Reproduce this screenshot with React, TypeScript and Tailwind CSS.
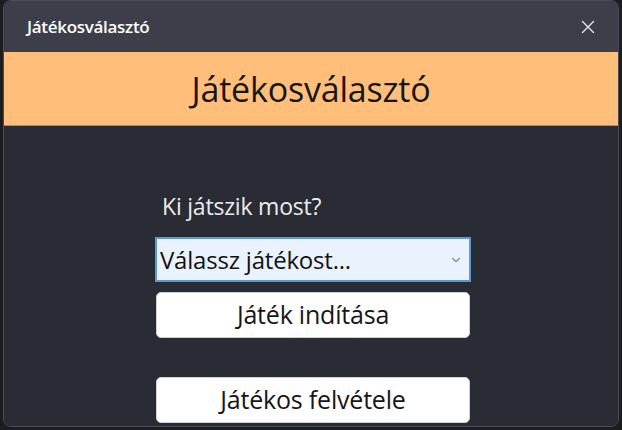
import { X, ChevronDown } from 'lucide-react';

export default function App() {
  return (
    <div className="w-[622px] h-[430px] bg-[#1c1d21] px-[3px] pb-[3px] overflow-hidden font-['Open_Sans',sans-serif]">
      {/* window frame */}
      <div className="h-full flex flex-col rounded-[8px] border border-[#4b4e58] overflow-hidden">
        {/* title bar */}
        <div className="h-[51px] shrink-0 bg-[#3c3f4a] flex items-center justify-between pl-[23px] pr-[19px]">
          <span className="text-[17px] font-semibold text-white tracking-[-0.3px]">Játékosválasztó</span>
          <X className="w-[22px] h-[22px] text-[#e6e6ea]" strokeWidth={1.5} />
        </div>

        {/* header band */}
        <div className="h-[74px] shrink-0 bg-[#ffbf7b] border-b border-[#b8895a] flex items-center justify-center">
          <h1 className="text-[34px] text-[#161616] tracking-[-0.2px] leading-none">Játékosválasztó</h1>
        </div>

        {/* body */}
        <div className="flex-1 bg-[#292c35] pl-[151px] pt-[63px]">
          <div className="w-[316px] flex flex-col">
            <label className="pl-[7px] text-[23px] text-[#ececec] leading-[34px] tracking-[-0.2px]">Ki játszik most?</label>
            <div className="mt-[14px] h-[45px] flex items-center justify-between bg-[#eaf3fd] border-2 border-[#5b9bd5] pl-[3px] pr-[6px]">
              <span className="text-[24px] text-[#111] tracking-[-0.2px]">Válassz játékost...</span>
              <ChevronDown className="w-[14px] h-[14px] text-[#888]" strokeWidth={2} />
            </div>
            <button className="mt-[10px] ml-[1px] w-[314px] h-[46px] rounded-[5px] bg-white border border-[#d0d0d0] text-[25px] text-[#161616] tracking-[-0.2px]">
              Játék indítása
            </button>
            <button className="mt-[39px] ml-[1px] w-[314px] h-[46px] rounded-[5px] bg-white border border-[#d0d0d0] text-[25px] text-[#161616] tracking-[-0.2px]">
              Játékos felvétele
            </button>
          </div>
        </div>
      </div>
    </div>
  );
}
